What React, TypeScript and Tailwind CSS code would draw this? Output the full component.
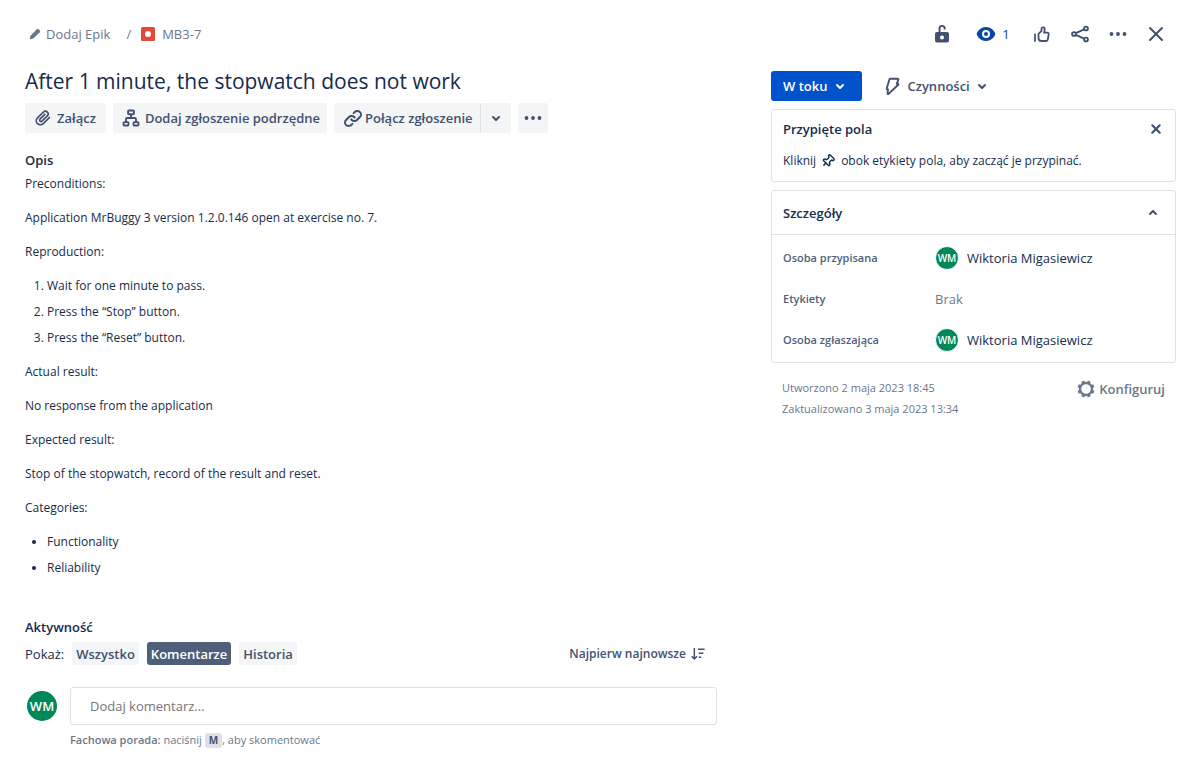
import type { ReactNode } from 'react';
import { Pin } from 'lucide-react';

type IconProps = { className?: string; children: ReactNode };

function Icon({ className = 'size-6', children }: IconProps) {
  return (
    <svg viewBox="0 0 24 24" className={`shrink-0 ${className}`} fill="currentColor" aria-hidden="true">
      {children}
    </svg>
  );
}

const PencilIcon = () => (
  <Icon className="size-4">
    <path d="M4 20l1.200-5.500L14.800 4.900a1.800 1.800 0 0 1 2.500 0l1.900 1.900a1.800 1.800 0 0 1 0 2.500L9.500 18.800z" />
  </Icon>
);

const ChevronDown = () => (
  <Icon>
    <path d="M8.292 10.293a1.009 1.009 0 000 1.419l2.939 2.965c.218.215.5.322.779.322s.556-.107.769-.322l2.93-2.955a1.01 1.01 0 000-1.419.987.987 0 00-1.406 0l-2.298 2.317-2.307-2.327a.99.99 0 00-1.406 0z" />
  </Icon>
);

const ChevronUp = () => (
  <Icon>
    <path d="M8.292 13.707a1.009 1.009 0 010-1.419l2.939-2.965A1.100 1.100 0 0112.010 9c.279 0 .556.107.769.323l2.930 2.955a1.010 1.010 0 010 1.419.987.987 0 01-1.406 0l-2.298-2.317-2.307 2.327a.990.990 0 01-1.406 0z" />
  </Icon>
);

const CrossIcon = () => (
  <Icon>
    <path d="M12 10.586L6.707 5.293a1 1 0 00-1.414 1.414L10.586 12l-5.293 5.293a1 1 0 001.414 1.414L12 13.414l5.293 5.293a1 1 0 001.414-1.414L13.414 12l5.293-5.293a1 1 0 10-1.414-1.414L12 10.586z" />
  </Icon>
);

const SmallCross = () => (
  <Icon>
    <path d="M8.300 8.300l7.400 7.400M15.700 8.300l-7.400 7.400" stroke="currentColor" strokeWidth="2.200" strokeLinecap="round" />
  </Icon>
);

const MoreIcon = () => (
  <Icon>
    <circle cx="5.500" cy="12" r="1.900" />
    <circle cx="12" cy="12" r="1.900" />
    <circle cx="18.500" cy="12" r="1.900" />
  </Icon>
);

const AttachIcon = () => (
  <Icon className="size-5">
    <path d="M11.643 17.965c-1.53 1.495-4.016 1.496-5.542.004a3.773 3.773 0 01.002-5.412l7.147-6.985a2.316 2.316 0 013.239-.001 2.205 2.205 0 010 3.158l-6.462 6.314a.65.65 0 01-.906 0 .616.616 0 010-.886l5.859-5.725a1 1 0 10-1.398-1.431l-5.86 5.726a2.616 2.616 0 00.001 3.746 2.65 2.65 0 003.702-.001l6.461-6.314a4.205 4.205 0 00-.001-6.02 4.316 4.316 0 00-6.034.001l-7.148 6.986a5.773 5.773 0 00-.001 8.271c2.307 2.256 6.03 2.255 8.34-.003l7.5-7.33a1 1 0 00-1.398-1.43l-7.5 7.33z" />
  </Icon>
);

const ChildIssueIcon = () => (
  <Icon className="size-5">
    <g fill="none" stroke="currentColor" strokeWidth="2.200">
      <rect x="8.500" y="3" width="7" height="4.500" rx="1" />
      <rect x="3" y="17" width="6" height="4" rx="1" />
      <rect x="15" y="17" width="6" height="4" rx="1" />
      <path d="M12 7.500v4.500M6 17v-3.500a1.500 1.500 0 0 1 1.500-1.500h9a1.500 1.500 0 0 1 1.500 1.500V17" />
    </g>
  </Icon>
);

const LinkIcon = () => (
  <Icon>
    <path d="M12.856 5.457l-.937.92a1.002 1.002 0 000 1.437 1.047 1.047 0 001.463 0l.984-.966c.967-.95 2.542-1.135 3.602-.288a2.54 2.54 0 01.203 3.81l-2.903 2.852a2.646 2.646 0 01-3.696 0l-1.11-1.09L9 13.57l1.108 1.089c1.822 1.788 4.802 1.788 6.622 0l2.905-2.852a4.558 4.558 0 00-.357-6.82c-1.893-1.517-4.695-1.226-6.422.47z" />
    <path d="M11.144 19.543l.937-.92a1.002 1.002 0 000-1.437 1.047 1.047 0 00-1.462 0l-.985.966c-.967.95-2.542 1.135-3.602.288a2.54 2.54 0 01-.203-3.81l2.903-2.852a2.646 2.646 0 013.696 0l1.11 1.09L15 11.43l-1.108-1.089c-1.822-1.788-4.802-1.788-6.622 0l-2.905 2.852a4.558 4.558 0 00.357 6.82c1.893 1.517 4.695 1.226 6.422-.47z" />
  </Icon>
);

const UnlockIcon = () => (
  <Icon>
    <path
      fillRule="evenodd"
      d="M7 10h10a2 2 0 0 1 2 2v6.500a2 2 0 0 1-2 2H7a2 2 0 0 1-2-2V12a2 2 0 0 1 2-2zm5 3.500a2 2 0 1 0 0 4 2 2 0 0 0 0-4z"
    />
    <path d="M9.500 10.500V6.500a2.600 2.600 0 0 1 5.200 0v1" fill="none" stroke="currentColor" strokeWidth="1.900" />
  </Icon>
);

const EyeIcon = () => (
  <Icon>
    <path
      fillRule="evenodd"
      d="M12 5c5.600 0 9.300 5.200 9.300 7s-3.700 7-9.300 7-9.300-5.200-9.300-7S6.400 5 12 5zm0 3a4 4 0 1 0 0 8 4 4 0 0 0 0-8zm0 2a2 2 0 1 1 0 4 2 2 0 0 1 0-4z"
    />
  </Icon>
);

const ThumbIcon = () => (
  <Icon>
    <g fill="none" stroke="currentColor" strokeWidth="1.800" strokeLinejoin="round" strokeLinecap="round">
      <path d="M8.500 12l3-3.200V7a1.600 1.600 0 0 1 3.200 0c0 1.400-.300 2.500-.700 3.600h3.200a1.500 1.500 0 0 1 1.500 1.800l-.900 5.100A1.700 1.700 0 0 1 16.100 19h-4.600a3 3 0 0 1-3-3z" />
      <path d="M5 12.500V19" />
    </g>
  </Icon>
);

const ShareIcon = () => (
  <Icon>
    <g fill="none" stroke="currentColor" strokeWidth="1.900">
      <circle cx="6" cy="12" r="1.900" />
      <circle cx="18" cy="6.500" r="1.900" />
      <circle cx="18" cy="17.500" r="1.900" />
      <path d="M7.800 11.200l8.400-3.900M7.800 12.800l8.400 3.900" />
    </g>
  </Icon>
);

const BoltIcon = () => (
  <Icon>
    <path
      d="M10.300 4.800h7.600a.500.500 0 0 1 .500.700L16.800 9.800h1a.500.500 0 0 1 .400.900L8.600 19.900c-.500.500-1.200.100-1.100-.500l.500-3.900h-.500a.800.800 0 0 1-.800-1l2.700-9a1 1 0 0 1 .900-.700z"
      fill="none"
      stroke="currentColor"
      strokeWidth="1.900"
      strokeLinejoin="round"
    />
  </Icon>
);

const GearIcon = () => (
  <Icon>
    <circle cx="12" cy="12" r="6" fill="none" stroke="currentColor" strokeWidth="2.400" />
    <g stroke="currentColor" strokeWidth="3">
      <path d="M12 6V3.500M12 20.500V18M3.500 12H6M18 12h2.500" transform="rotate(22.500 12 12)" />
      <path d="M12 6V3.500M12 20.500V18M3.500 12H6M18 12h2.500" transform="rotate(67.500 12 12)" />
    </g>
  </Icon>
);

const SortIcon = () => (
  <Icon className="size-4">
    <path
      d="M6.500 3v16M2.500 15.500l4 4 4-4M12 5h10M13 11h7M13 17h4"
      fill="none"
      stroke="currentColor"
      strokeWidth="2.200"
    />
  </Icon>
);

function IconButton({ label, children }: { label: string; children: ReactNode }) {
  return (
    <button type="button" aria-label={label} className="flex size-8 items-center justify-center">
      {children}
    </button>
  );
}

function Person() {
  return (
    <span className="flex items-center gap-2">
      <span className="flex size-6 items-center justify-center rounded-full border border-white bg-[#00875a] text-[10px] font-semibold text-white">
        WM
      </span>
      <span>Wiktoria Migasiewicz</span>
    </span>
  );
}

function Detail({ label, children }: { label: string; children: ReactNode }) {
  return (
    <div className="flex h-[41px] items-center">
      <dt className="w-[152px] text-[11px] font-semibold text-[#505f79]">{label}</dt>
      <dd className="text-[13px]">{children}</dd>
    </div>
  );
}

const tool = 'flex h-[30px] items-center rounded-[3px] bg-[#f4f5f7]';
const filter = 'h-[23px] rounded-[3px] px-1';

export default function App() {
  return (
    <div className="min-h-screen bg-white pr-[10px] pl-[25px] font-['Open_Sans','Noto_Sans',sans-serif] text-[13px] leading-[22px] text-[#172b4d]">
      <header className="flex h-[68px] items-center justify-between pr-1 text-[#42526e]">
        <nav aria-label="Breadcrumb" className="flex items-center text-[#6b778c]">
          <a href="#epic" className="flex items-center gap-[3px] pl-[2px]">
            <PencilIcon />
            Dodaj Epik
          </a>
          <span className="pr-[10px] pl-4">/</span>
          <a href="#issue" className="flex items-center gap-[7px]">
            <svg viewBox="0 0 14 14" className="size-[14px]" aria-hidden="true">
              <rect width="14" height="14" rx="1.500" fill="#e5493a" />
              <circle cx="7" cy="7" r="3" fill="#fff" />
            </svg>
            MB3-7
          </a>
        </nav>
        <div className="flex items-center gap-[6px]">
          <IconButton label="Ograniczenia"><UnlockIcon /></IconButton>
          <button type="button" aria-label="Obserwatorzy: 1" className="flex h-8 w-14 items-center justify-center gap-1 text-[#0747a6]">
            <EyeIcon />
            <span>1</span>
          </button>
          <IconButton label="Głosuj"><ThumbIcon /></IconButton>
          <IconButton label="Udostępnij"><ShareIcon /></IconButton>
          <IconButton label="Więcej"><MoreIcon /></IconButton>
          <IconButton label="Zamknij"><CrossIcon /></IconButton>
        </div>
      </header>

      <div className="grid grid-cols-[minmax(0,1fr)_405px] gap-[54px]">
        <main>
          <h1 className="text-[21px] leading-[26px] font-medium">After 1 minute, the stopwatch does not work</h1>
          <div className="mt-[9px] flex items-center gap-[7px] font-semibold text-[#42526e]">
            <button type="button" className={`${tool} gap-1 pr-[10px] pl-2`}><AttachIcon />Załącz</button>
            <button type="button" className={`${tool} gap-1 pr-[7px] pl-2`}><ChildIssueIcon />Dodaj zgłoszenie podrzędne</button>
            <div className="flex">
              <button type="button" className={`${tool} rounded-r-none pr-[7px] pl-[7px]`}><LinkIcon />Połącz zgłoszenie</button>
              <button type="button" aria-label="Więcej opcji łączenia" className={`${tool} w-[31px] justify-center rounded-l-none border-l border-[#dfe1e6]`}>
                <ChevronDown />
              </button>
            </div>
            <button type="button" aria-label="Więcej czynności" className={`${tool} w-[30px] justify-center`}><MoreIcon /></button>
          </div>

          <section className="mt-4">
            <h2 className="font-semibold">Opis</h2>
            <div className="mt-[2px] flex flex-col gap-3 text-[12px]">
              <p>Preconditions:</p>
              <p>Application MrBuggy 3 version 1.2.0.146 open at exercise no. 7.</p>
              <p>Reproduction:</p>
              <ol className="flex list-decimal flex-col gap-1 pl-[22px]">
                <li>Wait for one minute to pass.</li>
                <li>Press the “Stop” button.</li>
                <li>Press the “Reset” button.</li>
              </ol>
              <p>Actual result:</p>
              <p>No response from the application</p>
              <p>Expected result:</p>
              <p>Stop of the stopwatch, record of the result and reset.</p>
              <p>Categories:</p>
              <ul className="flex list-disc flex-col gap-1 pl-[22px]">
                <li>Functionality</li>
                <li>Reliability</li>
              </ul>
            </div>
          </section>

          <section className="mt-[37px]">
            <h2 className="font-semibold">Aktywność</h2>
            <div className="mt-1 flex items-center justify-between">
              <div className="flex items-center gap-2 font-semibold text-[#42526e]">
                <span className="font-normal text-[#172b4d]">Pokaż:</span>
                <button type="button" className={`${filter} bg-[#f4f5f7]`}>Wszystko</button>
                <button type="button" aria-pressed="true" className={`${filter} bg-[#505f79] text-white`}>Komentarze</button>
                <button type="button" className={`${filter} bg-[#f4f5f7]`}>Historia</button>
              </div>
              <button type="button" className="flex items-center gap-1 pr-[11px] text-[12px] font-semibold text-[#42526e]">
                Najpierw najnowsze
                <SortIcon />
              </button>
            </div>
            <div className="mt-[22px] flex gap-[13px]">
              <span className="mt-1 ml-[2px] flex size-[30px] items-center justify-center rounded-full bg-[#00875a] font-semibold text-white">
                WM
              </span>
              <div className="min-w-0 flex-1">
                <input
                  type="text"
                  aria-label="Dodaj komentarz"
                  placeholder="Dodaj komentarz..."
                  className="block h-[38px] w-full rounded-[3px] border border-[#dfe1e6] px-[19px] placeholder:text-[#757575]"
                />
                <p className="mt-1 text-[11px] text-[#6b778c]">
                  <strong className="font-semibold">Fachowa porada:</strong> naciśnij{' '}
                  <kbd className="inline-block h-[15px] rounded-[3px] bg-[#dfe1e6] px-1 font-['Open_Sans',sans-serif] text-[10px] leading-[15px] font-bold text-[#42526e]">M</kbd>, aby skomentować
                </p>
              </div>
            </div>
          </section>
        </main>

        <aside className="pt-[3px]">
          <div className="flex items-center gap-[18px]">
            <button type="button" className="flex h-[30px] items-center gap-px rounded-[3px] bg-[#0052cc] pr-[10px] pl-3 font-semibold text-white">
              W toku
              <ChevronDown />
            </button>
            <button type="button" className="flex h-[30px] items-center font-semibold text-[#42526e]">
              <BoltIcon />
              <span className="pl-[3px]">Czynności</span>
              <ChevronDown />
            </button>
          </div>

          <section className="mt-2 h-[73px] rounded-[3px] border border-[#dfe1e6] px-[11px] pt-2">
            <div className="flex h-[22px] items-center justify-between">
              <h2 className="font-semibold">Przypięte pola</h2>
              <button type="button" aria-label="Zamknij przypięte pola" className="-mr-1 text-[#42526e]"><SmallCross /></button>
            </div>
            <p className="mt-[10px] flex items-center text-[12px]">
              Kliknij
              <Pin className="mr-[6px] ml-[5px] size-[14px] rotate-45" strokeWidth={2.5} aria-hidden="true" />
              obok etykiety pola, aby zacząć je przypinać.
            </p>
          </section>

          <section className="mt-2 rounded-[3px] border border-[#dfe1e6]">
            <button type="button" aria-expanded="true" className="flex h-[44px] w-full items-center justify-between border-b border-[#dfe1e6] pr-[10px] pl-[11px] font-semibold">
              Szczegóły
              <span className="text-[#42526e]"><ChevronUp /></span>
            </button>
            <dl className="px-[11px] pt-[2px] pb-[2px]">
              <Detail label="Osoba przypisana"><Person /></Detail>
              <Detail label="Etykiety"><span className="text-[#6b778c]">Brak</span></Detail>
              <Detail label="Osoba zgłaszająca"><Person /></Detail>
            </dl>
          </section>

          <div className="mt-[14px] flex items-start justify-between pr-[11px] pl-[11px] text-[#6b778c]">
            <div className="text-[11px] leading-[21px]">
              <p>Utworzono 2 maja 2023 18:45</p>
              <p>Zaktualizowano 3 maja 2023 13:34</p>
            </div>
            <button type="button" className="flex items-center gap-px font-semibold"><GearIcon />Konfiguruj</button>
          </div>
        </aside>
      </div>
    </div>
  );
}
